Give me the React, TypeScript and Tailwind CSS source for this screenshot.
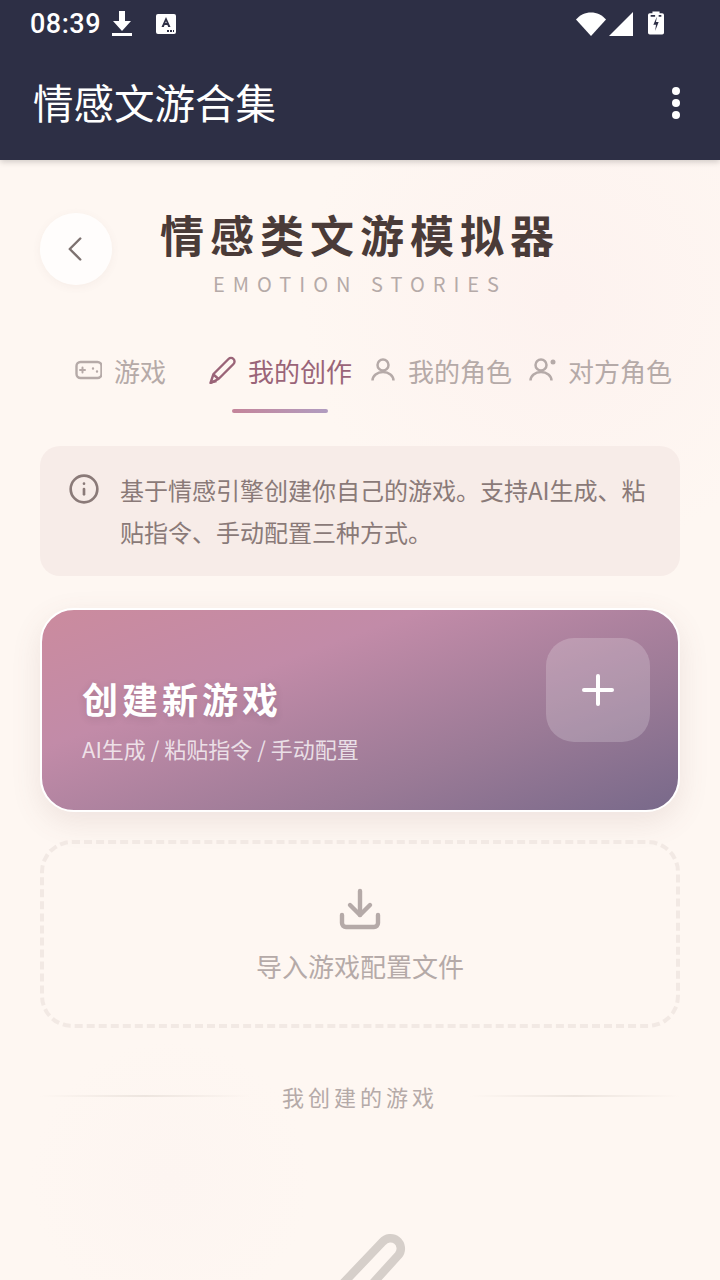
import React from 'react';
import { ChevronLeft, Download, Info, Plus } from 'lucide-react';

const tabs = [
  { label: '游戏', icon: 'game' },
  { label: '我的创作', icon: 'pen', active: true },
  { label: '我的角色', icon: 'user' },
  { label: '对方角色', icon: 'userDot' },
];

const TabIcon = ({ name }: { name: string }) => {
  if (name === 'game') {
    return (
      <svg width="28" height="28" viewBox="0 0 28 28" fill="none" stroke="currentColor" strokeWidth="2.400" strokeLinecap="round">
        <rect x="2.500" y="6" width="25" height="16" rx="4" />
        <path d="M6 14h5M8.500 11.500v5" strokeWidth="2" />
        <path d="M19 12.500h.01M23 15.500h.01" strokeWidth="2.400" />
      </svg>
    );
  }
  if (name === 'pen') {
    return (
      <svg width="28" height="28" viewBox="0 0 28 28" fill="none" stroke="currentColor" strokeWidth="2.400" strokeLinejoin="round">
        <path d="M2.500 27l3-9L20.500 3a3.500 3.500 0 0 1 5 5L10.500 23z" />
        <path d="M5.500 18.500l5 4.500M2.500 26.500l6-1.500" />
      </svg>
    );
  }
  if (name === 'user') {
    return (
      <svg width="28" height="28" viewBox="0 0 28 28" fill="none" stroke="currentColor" strokeWidth="2.500">
        <circle cx="15" cy="9" r="5.500" />
        <path d="M4.500 24.500a10.500 8.500 0 0 1 21 0" />
      </svg>
    );
  }
  return (
    <svg width="28" height="28" viewBox="0 0 28 28" fill="none" stroke="currentColor" strokeWidth="2.500">
      <circle cx="13" cy="9" r="5.500" />
      <path d="M2.500 24.500a10.500 8.500 0 0 1 21 0" />
      <circle cx="25" cy="6" r="2.500" fill="currentColor" stroke="none" />
    </svg>
  );
};

export default function App() {
  return (
    <div className="relative h-[1280px] w-[720px] overflow-hidden bg-[#fef7f2] font-['Noto_Sans_CJK_SC','Noto_Sans',sans-serif]">
      <div className="absolute inset-0 bg-[radial-gradient(circle_at_560px_300px,#fdf2ef_0,transparent_260px),radial-gradient(circle_at_170px_1180px,#fdf5f1_0,transparent_140px)]" />

      <header className="relative z-10 h-[160px] bg-[#2d2f45] text-white shadow-[0_2px_6px_rgba(0,0,0,0.18)]">
        <div className="flex h-[48px] items-center justify-between pl-[30px] pr-[56px]">
          <div className="flex items-center">
            <span className="font-['Roboto',sans-serif] text-[27px] font-medium tracking-[0.5px]">08:39</span>
            <svg className="ml-[10px]" width="22" height="28" viewBox="0 0 22 28" fill="white">
              <path d="M8 1h6v10h6l-9 10-9-10h6z" />
              <rect x="1" y="23" width="20" height="3" />
            </svg>
            <svg className="ml-[23px]" width="20" height="22" viewBox="0 0 20 22">
              <rect x="0" y="1" width="20" height="20" rx="2" fill="white" />
              <path d="M10 4l4.500 10h-2.300l-.8-2H8.600l-.8 2H5.500zM9.300 10h1.400L10 8.200z" fill="#2d2f45" />
              <path d="M11 17h2v2h-2zM14 17h2v2h-2zM17 17h1v2h-1z" fill="#2d2f45" />
            </svg>
          </div>
          <div className="flex items-center">
            <svg width="32" height="26" viewBox="0 0 32 26" fill="white">
              <path d="M16 25L1 8.500C5 4 10 1.500 16 1.500S27 4 31 8.500z" />
            </svg>
            <svg className="ml-[1px]" width="26" height="26" viewBox="0 0 26 26" fill="white">
              <path d="M25 1v24H1z" />
            </svg>
            <svg className="mb-[2px] ml-[14px]" width="16" height="26" viewBox="0 0 18 28">
              <path d="M5 1h8v2h3a2 2 0 0 1 2 2v20a2 2 0 0 1-2 2H2a2 2 0 0 1-2-2V5a2 2 0 0 1 2-2h3z" fill="white" />
              <path d="M10 7l-4 9h3l-1 7 4-10H9z" fill="#2d2f45" />
              <path d="M3 5h5v2H3zM12 5h3v2h-3z" fill="#2d2f45" />
            </svg>
          </div>
        </div>
        <div className="flex h-[112px] items-center justify-between pb-[2px] pl-[33px] pr-[40px]">
          <h1 className="-mt-[2px] text-[40.5px] font-normal leading-none">情感文游合集</h1>
          <div className="flex flex-col gap-[4px]">
            <span className="size-[8px] rounded-full bg-white" />
            <span className="size-[8px] rounded-full bg-white" />
            <span className="size-[8px] rounded-full bg-white" />
          </div>
        </div>
      </header>

      <main className="relative z-0 px-[40px] pt-[46px]">
        <div className="grid grid-cols-[72px_1fr_72px]">
          <button className="mt-[7px] flex size-[72px] items-center justify-center rounded-full bg-white/80 pr-[2px] text-[#7d7270] shadow-[0_2px_10px_rgba(120,90,80,0.06)]">
            <ChevronLeft size={42} strokeWidth={1.4} />
          </button>
          <div className="text-center">
            <div className="-mt-[3px] text-[44px] font-bold leading-[62px] tracking-[6px] text-[#4a3b38]">情感类文游模拟器</div>
            <div className="mt-[5px] text-[20px] leading-[28px] tracking-[8px] text-[#b5aaa8]">EMOTION STORIES</div>
          </div>
        </div>

        <nav className="mt-[44px] grid grid-cols-4">
          {tabs.map((tab) => (
            <div key={tab.label} className="flex flex-col items-center">
              <div className={`flex h-[56px] items-center gap-[12px] whitespace-nowrap text-[26px] ${tab.active ? 'text-[#9a6478]' : 'text-[#b5aaa8]'}`}>
                <TabIcon name={tab.icon} />
                <span>{tab.label}</span>
              </div>
              <div className={`mt-[11px] h-[4px] w-[96px] rounded-full ${tab.active ? 'bg-gradient-to-r from-[#c4849a] to-[#b09cc0]' : ''}`} />
            </div>
          ))}
        </nav>

        <div className="mt-[33px] flex h-[130px] items-start gap-[20px] rounded-[20px] bg-[#f7ece8] pl-[28px] pr-[24px] pt-[23px]">
          <Info size={32} strokeWidth={2} className="mt-[4px] shrink-0 text-[#8a7a78]" />
          <p className="text-[24px] leading-[42px] text-[#8a7a78]">基于情感引擎创建你自己的游戏。支持AI生成、粘贴指令、手动配置三种方式。</p>
        </div>

        <div className="mt-[32px] flex h-[204px] items-start justify-between rounded-[34px] border-[2px] border-white bg-[linear-gradient(160deg,#cb8b9e_0%,#c28ba8_32%,#9a7a96_70%,#78698a_100%)] pl-[40px] pr-[28px] pt-[28px] shadow-[0_10px_30px_rgba(120,80,80,0.12)]">
          <div className="pt-[35px]">
            <div className="text-[36px] font-bold leading-[50px] tracking-[4px] text-white [text-shadow:0_2px_8px_rgba(0,0,0,0.12)]">创建新游戏</div>
            <div className="mt-[8px] text-[22px] leading-[34px] text-white/75">AI生成 / 粘贴指令 / 手动配置</div>
          </div>
          <div className="flex size-[104px] items-center justify-center rounded-[28px] bg-white/20 text-white">
            <Plus size={48} strokeWidth={2} />
          </div>
        </div>

        <div className="mt-[28px] flex h-[188px] flex-col items-center rounded-[32px] border-[4px] border-dashed border-[#f2e9e4] pt-[41px] text-[#b5aaa8]">
          <Download size={48} strokeWidth={2.2} />
          <div className="mt-[11px] text-[26px] leading-[44px]">导入游戏配置文件</div>
        </div>

        <div className="mt-[52px] flex items-center justify-center gap-[32px]">
          <div className="h-[2px] flex-1 bg-gradient-to-r from-transparent via-[#ede5df] to-transparent" />
          <div className="text-[22px] leading-[32px] tracking-[4px] text-[#b5aaa8]">我创建的游戏</div>
          <div className="h-[2px] flex-1 bg-gradient-to-r from-transparent via-[#ede5df] to-transparent" />
        </div>

        <div className="mt-[121px] flex justify-center text-[#d6cfca]">
          <svg width="120" height="120" viewBox="0 0 120 120" fill="none" stroke="currentColor" strokeWidth="8.500" strokeLinecap="round">
            <path d="M41.500 52L82.500 9A10 10 0 0 1 98.500 22L69.500 54L49.500 76" />
          </svg>
        </div>
      </main>
    </div>
  );
}
